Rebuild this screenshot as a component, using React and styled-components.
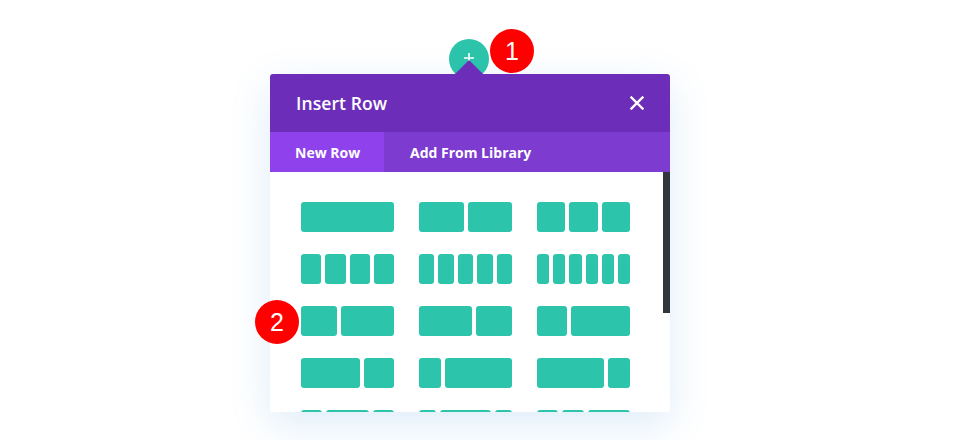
import React from "react";
import styled, { createGlobalStyle } from "styled-components";

const Global = createGlobalStyle`
  html, body { margin: 0; padding: 0; background: #fff; }
  body { font-family: "Open Sans", "Noto Sans", sans-serif; }
`;

const Page = styled.div`
  width: 959px;
  height: 440px;
  padding: 39px 0 0 270px;
  box-sizing: border-box;
  overflow: hidden;
`;

const Popup = styled.div`
  position: relative;
  width: 400px;
  display: flex;
  flex-direction: column;
`;

const TriggerRow = styled.div`
  display: flex;
  padding-left: 179px;
  margin-bottom: -5px;
`;

const AddButton = styled.div`
  width: 40px;
  height: 40px;
  border-radius: 50%;
  background: #2cc5ab;
  color: #fff;
  display: flex;
  justify-content: center;
  padding-top: 14px;
  box-sizing: border-box;
`;

const Panel = styled.div`
  position: relative;
  background: #fff;
  border-radius: 3px;
  box-shadow: 0 12px 40px rgba(43, 135, 218, 0.16);
`;

const Header = styled.div`
  position: relative;
  height: 58px;
  background: #6c2eb9;
  border-radius: 3px 3px 0 0;
  display: flex;
  align-items: center;
  justify-content: space-between;
  padding: 0 26px 0 26px;
  &::before {
    content: "";
    position: absolute;
    top: -14px;
    left: 185px;
    border-left: 14px solid transparent;
    border-right: 14px solid transparent;
    border-bottom: 14px solid #6c2eb9;
  }
`;

const Title = styled.div`
  color: #fff;
  font-size: 17.5px;
  font-weight: 600;
  letter-spacing: 0.1px;
`;

const Close = styled.div`
  width: 14px;
  height: 14px;
  display: flex;
`;

const Tabs = styled.div`
  height: 40px;
  background: #7e3bd0;
  display: flex;
`;

const Tab = styled.div`
  height: 100%;
  display: flex;
  align-items: center;
  flex-shrink: 0;
  white-space: nowrap;
  padding: 0 26px 0 ${(p) => (p.$active ? "25px" : "26px")};
  font-size: 14px;
  font-weight: 700;
  color: #fff;
  background: ${(p) => (p.$active ? "#8f42ec" : "transparent")};
  width: ${(p) => (p.$active ? "114px" : "auto")};
  box-sizing: border-box;
`;

const Body = styled.div`
  height: 240px;
  display: flex;
  overflow: hidden;
  border-radius: 0 0 3px 3px;
`;

const Content = styled.div`
  flex: 1;
  padding: 30px 0 0 31px;
  display: grid;
  grid-template-columns: repeat(3, 93px);
  grid-auto-rows: 30px;
  column-gap: 25px;
  row-gap: 22px;
`;

const Track = styled.div`
  width: 7px;
  display: flex;
  flex-direction: column;
`;

const Thumb = styled.div`
  height: 141px;
  background: #32373c;
`;

const Layout = styled.div`
  display: flex;
  gap: 4px;
`;

const Col = styled.div`
  flex: ${(p) => p.$f} 1 0;
  background: #2cc5ab;
  border-radius: 3px;
`;

const Badge = styled.div`
  position: absolute;
  left: ${(p) => p.$x}px;
  top: ${(p) => p.$y}px;
  width: 44px;
  height: 44px;
  border-radius: 50%;
  background: #ff0000;
  color: #fff;
  font-family: "Liberation Sans", Arial, sans-serif;
  font-size: 25px;
  display: flex;
  align-items: center;
  justify-content: center;
  z-index: 5;
`;

const layouts = [
  [4],
  [2, 2],
  [1, 1, 1],
  [1, 1, 1, 1],
  [1, 1, 1, 1, 1],
  [1, 1, 1, 1, 1, 1],
  [2, 3],
  [3, 2],
  [1, 2],
  [2, 1],
  [1, 3],
  [3, 1],
  [1, 2, 1],
  [1, 3, 1],
  [1, 1, 2],
];

export default function App() {
  return (
    <>
      <Global />
      <Page>
        <Popup>
          <TriggerRow>
            <AddButton>
              <svg width="10" height="10" viewBox="0 0 10 10">
                <path d="M5 0v10M0 5h10" stroke="#fff" strokeWidth="1.6" />
              </svg>
            </AddButton>
          </TriggerRow>
          <Panel>
            <Header>
              <Title>Insert Row</Title>
              <Close>
                <svg width="14" height="14" viewBox="0 0 14 14">
                  <path d="M1.5 1.5l11 11M12.5 1.5l-11 11" stroke="#fff" strokeWidth="2.4" strokeLinecap="square" />
                </svg>
              </Close>
            </Header>
            <Tabs>
              <Tab $active>New Row</Tab>
              <Tab>Add From Library</Tab>
            </Tabs>
            <Body>
              <Content>
                {layouts.map((l, i) => (
                  <Layout key={i}>
                    {l.map((f, j) => (
                      <Col key={j} $f={f} />
                    ))}
                  </Layout>
                ))}
              </Content>
              <Track>
                <Thumb />
              </Track>
            </Body>
          </Panel>
          <Badge $x={220} $y={-10}>1</Badge>
          <Badge $x={-15} $y={261}>2</Badge>
        </Popup>
      </Page>
    </>
  );
}
